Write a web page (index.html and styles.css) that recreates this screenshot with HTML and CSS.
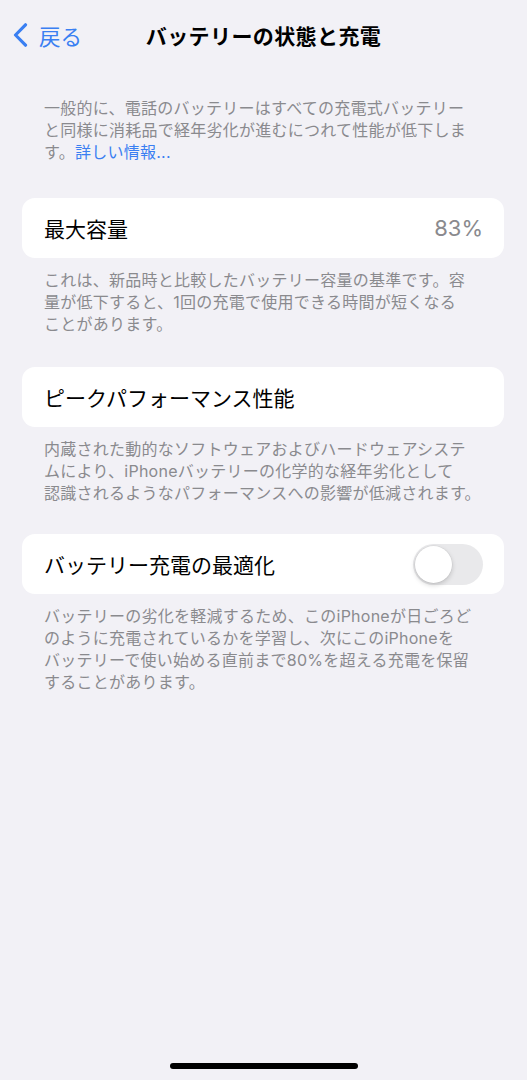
FILE: index.html
```html
<!DOCTYPE html>
<html lang="ja">
<head>
<meta charset="utf-8">
<title>バッテリーの状態と充電</title>
<link rel="stylesheet" href="styles.css">
</head>
<body>
<header class="nav">
  <a class="back">
    <svg class="chev" width="18" height="24" viewBox="0 0 18 24"><path d="M14.5 1.8 L4.5 12 L14.5 22.2" fill="none" stroke="#3a7ff2" stroke-width="3.2" stroke-linecap="round" stroke-linejoin="round"/></svg>
    <span>戻る</span>
  </a>
  <h1 class="title">バッテリーの状態と充電</h1>
  <div></div>
</header>
<main class="content">
  <p class="note intro">一般的に、電話のバッテリーはすべての充電式バッテリー<br>と同様に消耗品で経年劣化が進むにつれて性能が低下しま<br>す。<a class="link">詳しい情報...</a></p>

  <section class="card"><span class="label">最大容量</span><span class="value">83%</span></section>
  <p class="note">これは、新品時と比較したバッテリー容量の基準です。容<br>量が低下すると、1回の充電で使用できる時間が短くなる<br>ことがあります。</p>

  <section class="card"><span class="label">ピークパフォーマンス性能</span></section>
  <p class="note">内蔵された動的なソフトウェアおよびハードウェアシステ<br>ムにより、iPhoneバッテリーの化学的な経年劣化として<br>認識されるようなパフォーマンスへの影響が低減されます。</p>

  <section class="card card-last"><span class="label">バッテリー充電の最適化</span><span class="toggle"><span class="knob"></span></span></section>
  <p class="note">バッテリーの劣化を軽減するため、このiPhoneが日ごろど<br>のように充電されているかを学習し、次にこのiPhoneを<br>バッテリーで使い始める直前まで80%を超える充電を保留<br>することがあります。</p>
</main>
<div class="home"></div>
</body>
</html>
```
FILE: styles.css
```css
* { box-sizing: border-box; }
html, body { margin: 0; padding: 0; }
body {
  background: #f2f1f6;
  font-family: Inter, "Noto Sans CJK JP", sans-serif;
  color: #000;
  min-height: 1080px;
}
.nav {
  height: 70px;
  display: grid;
  grid-template-columns: 1fr auto 1fr;
  align-items: center;
}
.back {
  display: flex;
  align-items: center;
  gap: 10px;
  padding-left: 11px;
  color: #3a7ff2;
  font-size: 21.5px;
}
.chev { display: block; }
.title {
  margin: 0;
  font-size: 21px;
  font-weight: 700;
  letter-spacing: 0.4px;
}
.content {
  padding: 27px 23px 0 22px;
  display: flex;
  flex-direction: column;
}
.note {
  margin: 11px 0 0;
  padding: 0 0 0 22px;
  font-size: 16px;
  line-height: 22px;
  letter-spacing: 0.25px;
  color: #8a8a8e;
  white-space: nowrap;
}
.intro { margin-top: 0; }
.link { color: #3a7ff2; }
.card {
  background: #fff;
  border-radius: 13px;
  height: 60px;
  padding: 0 21px 0 22px;
  display: flex;
  align-items: center;
  justify-content: space-between;
  margin-top: 32px;
}
.intro + .card { margin-top: 35px; }
.card-last { margin-top: 30px; }
.label { font-size: 21px; }
.value { font-size: 22px; color: #8a8a8e; }
.toggle {
  width: 70px;
  height: 41px;
  border-radius: 21px;
  background: #e9e9eb;
  display: flex;
  align-items: center;
  padding-left: 2px;
}
.knob {
  width: 37px;
  height: 37px;
  border-radius: 50%;
  background: #fff;
  box-shadow: 0 2px 5px rgba(0,0,0,0.18), 0 0 0 0.5px rgba(0,0,0,0.06);
}
.home {
  position: fixed;
  left: 170px;
  bottom: 11px;
  width: 188px;
  height: 6px;
  border-radius: 3px;
  background: #000;
}
```
